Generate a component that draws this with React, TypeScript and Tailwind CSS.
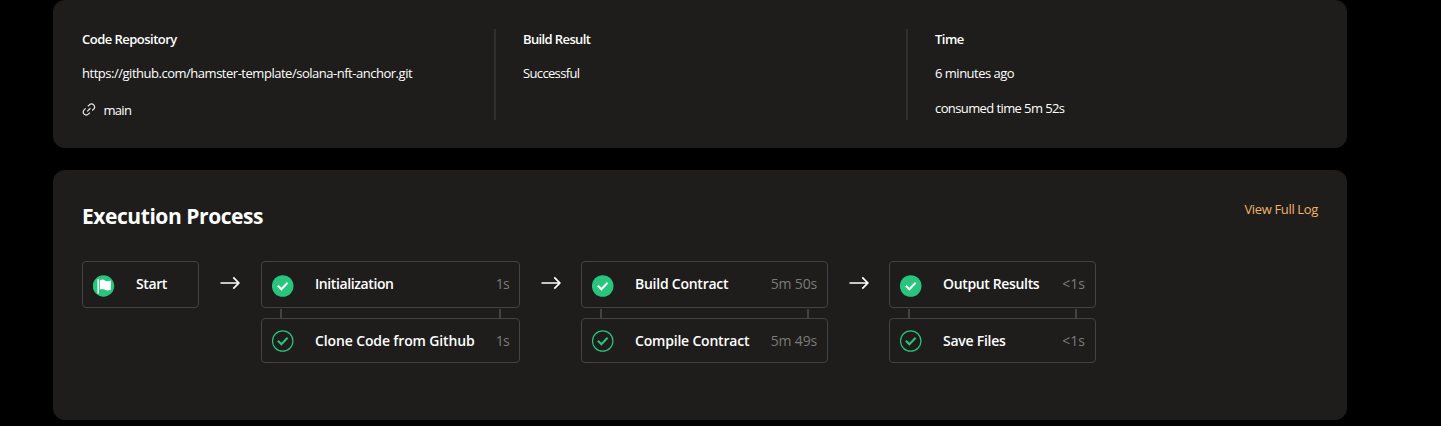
import React from "react";

function LinkIcon() {
  return (
    <svg width="14" height="14" viewBox="0 0 14 14" fill="none" stroke="#e4e4e2" strokeWidth="1.3">
      <path d="M5.8 3.3 7.4 1.9a2.9 2.9 0 0 1 4.3 0 2.9 2.9 0 0 1 0 4.2L10.2 7.5" />
      <path d="M3.6 5.4 2.1 6.9a2.9 2.9 0 0 0 0 4.2 2.9 2.9 0 0 0 4.2 0L7.9 9.6" />
      <path d="M5.2 8.4 8.4 5.2" />
    </svg>
  );
}

function FlagIcon() {
  return (
    <svg width="22" height="22" viewBox="0 0 22 22">
      <circle cx="10.5" cy="11" r="10.7" fill="#28c57c" />
      <path d="M5.2 4.2v14.3" stroke="#fff" strokeWidth="1.5" />
      <path d="M6.8 5.4c1.800-1.400 3.600-1 5.100 0 1.800 1.200 3.700 1.100 5.900.1v9.200c-2.200 1.100-4.200 1-6.100.1-1.500-.9-3.200-1.100-4.900-.1z" fill="#fff" />
    </svg>
  );
}

function CheckIcon({ filled }: { filled?: boolean }) {
  return (
    <svg width="22" height="22" viewBox="0 0 22 22" fill="none">
      <circle cx="10.7" cy="11" r={filled ? 10.8 : 10.2} fill={filled ? "#28c57c" : "none"} stroke={filled ? "none" : "#28c57c"} strokeWidth="1.2" />
      <path d="m5.9 10.7 3.5 3.5 6.200-6.400" stroke={filled ? "#fff" : "#28c57c"} strokeWidth="2" />
    </svg>
  );
}

function Arrow() {
  return (
    <svg className="mt-[15px] shrink-0" width="20" height="14" viewBox="0 0 20 14" fill="none" stroke="#fff" strokeWidth="1.7">
      <path d="M.5 7h18M13.300 1.300 18.800 7l-5.500 5.700" />
    </svg>
  );
}

type Step = { name: string; time: string; track: string; timeTrack: string };

function StepText({ step }: { step: Step }) {
  return (
    <>
      <span className={`ml-[21px] whitespace-nowrap text-[14px] font-semibold ${step.track}`}>{step.name}</span>
      <span className={`ml-auto whitespace-nowrap text-[14px] text-[#7b7b79] ${step.timeTrack}`}>{step.time}</span>
    </>
  );
}

function Stage({ width, main, sub }: { width: string; main: Step; sub: Step }) {
  return (
    <div className={`${width} shrink-0`}>
      <div className="flex h-[47px] items-center rounded-[4px] border border-[#434343] px-[10px] pb-px">
        <span className="mt-[4px]"><CheckIcon filled /></span>
        <StepText step={main} />
      </div>
      <div className="mt-px flex h-[9px] justify-between px-[19px]">
        <span className="w-[2px] bg-[#434343]" />
        <span className="w-[2px] bg-[#434343]" />
      </div>
      <div className="flex h-[45px] items-center rounded-[4px] border border-[#434343] px-[10px]">
        <CheckIcon />
        <StepText step={sub} />
      </div>
    </div>
  );
}

export default function App() {
  return (
    <div className="h-[426px] bg-black pr-[94px] pl-[53px] font-['Open_Sans',sans-serif] text-[13px] leading-[20px] text-white">
      <section className="flex h-[148px] rounded-[12px] bg-[#1e1d1b] px-[29px] pt-[29px]">
        <div className="h-[91px] w-[412px]">
          <div className="font-semibold tracking-[-0.520px]">Code Repository</div>
          <div className="mt-[14px] tracking-[-0.480px]">https://github.com/hamster-template/solana-nft-anchor.git</div>
          <div className="mt-[17px] flex items-center gap-[7.500px]">
            <LinkIcon />
            <span className="tracking-[-0.700px]">main</span>
          </div>
        </div>
        <div className="h-[91px] w-[412px] border-l-2 border-[#302f2d] pl-[27px]">
          <div className="font-semibold tracking-[-0.620px]">Build Result</div>
          <div className="mt-[14px] tracking-[-0.650px]">Successful</div>
        </div>
        <div className="h-[91px] border-l-2 border-[#302f2d] pl-[27px]">
          <div className="font-semibold tracking-[-0.500px]">Time</div>
          <div className="mt-[14px] tracking-[-0.500px]">6 minutes ago</div>
          <div className="mt-[15px] tracking-[-0.600px]">consumed time 5m 52s</div>
        </div>
      </section>
      <section className="mt-[22px] h-[250px] rounded-[12px] bg-[#1e1d1b] px-[29px] pt-[29px]">
        <div className="flex justify-between">
          <h2 className="text-[21px] leading-[34px] font-bold tracking-[-0.440px]">Execution Process</h2>
          <a className="tracking-[-0.350px] text-[#f4b26b]">View Full Log</a>
        </div>
        <div className="mt-[28px] flex items-start">
          <div className="flex h-[47px] w-[117px] shrink-0 items-center rounded-[4px] border border-[#434343] px-[10px] pb-px">
            <span className="mt-[4px]"><FlagIcon /></span>
            <span className="ml-[21px] text-[14px] font-semibold tracking-[-0.400px]">Start</span>
          </div>
          <div className="flex w-[62px] pl-[21px]"><Arrow /></div>
          <Stage
            width="w-[259px]"
            main={{ name: "Initialization", time: "1s", track: "tracking-[-0.400px]", timeTrack: "tracking-[-0.700px]" }}
            sub={{ name: "Clone Code from Github", time: "1s", track: "tracking-[-0.130px]", timeTrack: "tracking-[-0.700px]" }}
          />
          <div className="flex w-[61px] pl-[21px]"><Arrow /></div>
          <Stage
            width="w-[247px]"
            main={{ name: "Build Contract", time: "5m 50s", track: "tracking-[-0.250px]", timeTrack: "tracking-[-0.170px]" }}
            sub={{ name: "Compile Contract", time: "5m 49s", track: "tracking-[-0.200px]", timeTrack: "tracking-[-0.170px]" }}
          />
          <div className="flex w-[61px] pl-[21px]"><Arrow /></div>
          <Stage
            width="w-[207px]"
            main={{ name: "Output Results", time: "<1s", track: "tracking-[-0.350px]", timeTrack: "" }}
            sub={{ name: "Save Files", time: "<1s", track: "tracking-[-0.250px]", timeTrack: "" }}
          />
        </div>
      </section>
    </div>
  );
}
